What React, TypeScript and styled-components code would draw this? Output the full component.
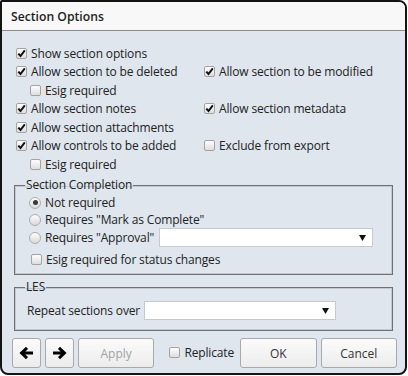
import styled, { createGlobalStyle } from "styled-components"

const GlobalStyle = createGlobalStyle`
	body {
		margin: 0;
		font-family: "Open Sans", "Liberation Sans", sans-serif;
		font-size: 12px;
		letter-spacing: -0.15px;
		color: #222;
	}
`

// Small drawn controls

const CheckMark = () => (
	<svg width="9" height="9" viewBox="0 0 9 9">
		<path d="M1.3 4.6 L3.5 7 L7.8 1.4" fill="none" stroke="#111" strokeWidth="2" />
	</svg>
)

const Check: React.FC<{ checked?: boolean }> = ({ checked }) => (
	<Box>{checked && <CheckMark />}</Box>
)

const Radio: React.FC<{ checked?: boolean }> = ({ checked }) => (
	<RadioCircle>{checked && <RadioDot />}</RadioCircle>
)

const DropArrow = () => (
	<svg width="7" height="6" viewBox="0 0 7 6">
		<path d="M0 0 H7 L3.5 6 Z" fill="#111" />
	</svg>
)

const Arrow: React.FC<{ dir: "left" | "right" }> = ({ dir }) => (
	<svg width="15" height="14" viewBox="0 0 15 14">
		<g transform={dir === "right" ? "translate(15 0) scale(-1 1)" : undefined}>
			<path
				d="M14 7 H3 M8 1.8 L2.6 7 L8 12.2"
				fill="none"
				stroke="#000"
				strokeWidth="3"
			/>
		</g>
	</svg>
)

const Option: React.FC<{ label: string; checked?: boolean; indent?: boolean }> = ({
	label,
	checked,
	indent,
}) => (
	<OptionRow $indent={indent}>
		<Check checked={checked} />
		<span>{label}</span>
	</OptionRow>
)

const App: React.FC = () => {
	return (
		<>
			<GlobalStyle />
			<Dialog>
				<TitleBar>Section Options</TitleBar>
				<Body>
					<OptionsGrid>
						<Option label="Show section options" checked />
						<div />
						<Option label="Allow section to be deleted" checked />
						<Option label="Allow section to be modified" checked />
						<Option label="Esig required" indent />
						<div />
						<Option label="Allow section notes" checked />
						<Option label="Allow section metadata" checked />
						<Option label="Allow section attachments" checked />
						<div />
						<Option label="Allow controls to be added" checked />
						<Option label="Exclude from export" />
						<Option label="Esig required" indent />
					</OptionsGrid>

					<Group $padLeft={14}>
						<Legend $shift={-4}>Section Completion</Legend>
						<RadioRow>
							<Radio checked />
							<span>Not required</span>
						</RadioRow>
						<RadioRow>
							<Radio />
							<span>Requires "Mark as Complete"</span>
						</RadioRow>
						<RadioRow $tall>
							<Radio />
							<span>Requires "Approval"</span>
							<Select $grow>
								<DropArrow />
							</Select>
						</RadioRow>
						<EsigRow>
							<Check />
							<span>Esig required for status changes</span>
						</EsigRow>
					</Group>

					<Group $padLeft={12} $last>
						<Legend $shift={-2}>LES</Legend>
						<LesRow>
							<span>Repeat sections over</span>
							<Select $width={192}>
								<DropArrow />
							</Select>
						</LesRow>
					</Group>

					<ButtonBar>
						<Button $width={30}>
							<Arrow dir="left" />
						</Button>
						<Button $width={29}>
							<Arrow dir="right" />
						</Button>
						<Button $width={78} disabled>
							Apply
						</Button>
						<ReplicateLabel>
							<Check />
							<span>Replicate</span>
						</ReplicateLabel>
						<Button $width={78}>OK</Button>
						<Button $width={78}>Cancel</Button>
					</ButtonBar>
				</Body>
			</Dialog>
		</>
	)
}

export default App

const Dialog = styled.div`
	width: 407px;
	box-sizing: border-box;
	border: 2px solid #141414;
	border-radius: 2px 8px 8px 8px;
	overflow: hidden;
	background: #dfe6ee;
`

const TitleBar = styled.div`
	height: 28px;
	border-bottom: 1px solid #8c8c8c;
	background: #f8f8f8;
	padding-left: 9px;
	display: flex;
	align-items: center;
	font-size: 12.2px;
	font-weight: 600;
	letter-spacing: 0;
	color: #1e1e1e;
`

const Body = styled.div`
	padding: 13px 0 5px;
`

const OptionsGrid = styled.div`
	display: grid;
	grid-template-columns: 188px 1fr;
	grid-auto-rows: 18.5px;
	padding-left: 14px;
`

const OptionRow = styled.label<{ $indent?: boolean }>`
	display: flex;
	align-items: center;
	gap: 4px;
	margin-left: ${({ $indent }) => ($indent ? "14px" : "0")};
	white-space: nowrap;
`

const Box = styled.span`
	width: 11px;
	height: 11px;
	box-sizing: border-box;
	border: 1px solid #a3a3a3;
	border-radius: 2px;
	background: linear-gradient(#fdfdfd, #dedede);
	display: flex;
	align-items: center;
	justify-content: center;
	flex-shrink: 0;
`

const RadioCircle = styled.span`
	width: 12px;
	height: 12px;
	box-sizing: border-box;
	border: 1px solid #acacac;
	border-radius: 50%;
	background: linear-gradient(#fdfdfd, #d9d9d9);
	display: flex;
	align-items: center;
	justify-content: center;
	flex-shrink: 0;
`

const RadioDot = styled.span`
	width: 5px;
	height: 5px;
	border-radius: 50%;
	background: #3a3a3a;
`

const Group = styled.fieldset<{ $padLeft: number; $last?: boolean }>`
	margin: ${({ $last }) => ($last ? "3px" : "2.5px")} 12px 0 12px;
	padding: 0 19px ${({ $last }) => ($last ? "10px" : "6px")} ${({ $padLeft }) => $padLeft}px;
	border: 1px solid #707070;
	box-shadow: inset 0 0 0 1px #c3c9d1;
	min-width: 0;
`

const Legend = styled.legend<{ $shift: number }>`
	margin-left: ${({ $shift }) => $shift}px;
	padding: 0 1px;
	line-height: 18px;
`

const RadioRow = styled.div<{ $tall?: boolean }>`
	display: flex;
	align-items: center;
	gap: 4px;
	height: ${({ $tall }) => ($tall ? "19px" : "17px")};
	white-space: nowrap;
`

const EsigRow = styled.div`
	display: flex;
	align-items: center;
	gap: 4px;
	height: 18px;
	margin: 3px 0 0 2px;
`

const LesRow = styled.div`
	display: flex;
	align-items: center;
	gap: 4px;
	height: 19px;
	margin-top: 5px;
`

const Select = styled.div<{ $grow?: boolean; $width?: number }>`
	height: 19px;
	box-sizing: border-box;
	border: 1px solid #c6cad0;
	background: #fff;
	display: flex;
	align-items: center;
	justify-content: flex-end;
	padding-right: 6px;
	margin-left: ${({ $grow }) => ($grow ? "1px" : "0")};
	flex: ${({ $grow }) => ($grow ? "1" : "none")};
	width: ${({ $width }) => ($width ? `${$width}px` : "auto")};
`

const ButtonBar = styled.div`
	display: flex;
	align-items: center;
	gap: 4px;
	margin-top: 7px;
	padding: 0 8px 0 10px;
`

const Button = styled.button<{ $width: number }>`
	width: ${({ $width }) => $width}px;
	height: 30px;
	box-sizing: border-box;
	border: 1px solid #a9a9a9;
	border-radius: 3px;
	background: linear-gradient(#fbfbfb, #ececec);
	font-family: inherit;
	font-size: 12px;
	color: #333;
	display: flex;
	align-items: center;
	justify-content: center;
	padding: 0;

	&:disabled {
		color: #a2a2a2;
	}
`

const ReplicateLabel = styled.label`
	display: flex;
	align-items: center;
	gap: 4px;
	margin: 0 2px 0 11px;
	padding-bottom: 2px;
`
